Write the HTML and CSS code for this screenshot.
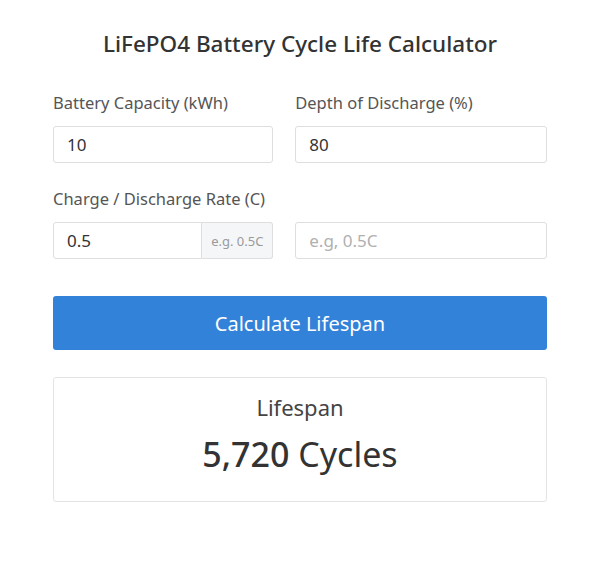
FILE: index.html
```html
<!DOCTYPE html>
<html lang="en">
<head>
    <meta charset="UTF-8">
    <meta name="viewport" content="width=device-width, initial-scale=1.0">
    <title>LiFePO4 Battery Cycle Life Calculator</title>
    <link rel="stylesheet" href="styles.css">
</head>
<body>
    <div class="calculator">
        <h1 class="title">LiFePO4 Battery Cycle Life Calculator</h1>

        <div class="field-grid">
            <div class="field">
                <label for="capacity">Battery Capacity (kWh)</label>
                <input id="capacity" class="text-input" type="text" value="10">
            </div>
            <div class="field">
                <label for="dod">Depth of Discharge (%)</label>
                <input id="dod" class="text-input" type="text" value="80">
            </div>
            <div class="field">
                <label for="rate">Charge / Discharge Rate (C)</label>
                <div class="input-group">
                    <input id="rate" class="text-input" type="text" value="0.5">
                    <span class="input-addon">e.g. 0.5C</span>
                </div>
            </div>
            <div class="field field-bottom">
                <input class="text-input" type="text" placeholder="e.g, 0.5C">
            </div>
        </div>

        <button class="calc-button" id="calc-btn">Calculate Lifespan</button>

        <div class="result-card">
            <div class="result-label">Lifespan</div>
            <div class="result-value"><span class="result-number" id="cycles">5,720</span> Cycles</div>
        </div>
    </div>
</body>
</html>
```

FILE: styles.css
```css
:root {
    --text-color: #333333;
    --label-color: #555555;
    --border-color: #dedede;
    --accent-color: #3282d9;
}

body {
    font-family: 'Noto Sans', 'Open Sans', sans-serif;
    margin: 0;
    padding: 0;
    background-color: #ffffff;
    color: var(--text-color);
}

.calculator {
    padding: 30px 53px 40px;
    display: flex;
    flex-direction: column;
}

.title {
    margin: 0;
    font-size: 22.5px;
    line-height: 28px;
    font-weight: 500;
    text-align: center;
    color: #333;
}

.field-grid {
    display: grid;
    grid-template-columns: 7fr 8fr;
    column-gap: 22px;
    row-gap: 26px;
    margin-top: 35px;
}

.field {
    display: flex;
    flex-direction: column;
    gap: 13px;
}

.field-bottom {
    justify-content: flex-end;
}

.field label {
    font-size: 16.5px;
    line-height: 20px;
    color: var(--label-color);
}

.text-input {
    box-sizing: border-box;
    height: 37px;
    width: 100%;
    padding: 0 13px;
    border: 1px solid var(--border-color);
    border-radius: 3px;
    font-family: inherit;
    font-size: 17px;
    color: var(--text-color);
    background: #fff;
    outline: none;
}

.text-input::placeholder {
    color: #b0b0b0;
    font-size: 17px;
}

.input-group {
    display: flex;
    height: 37px;
}

.input-group .text-input {
    flex: 1;
    min-width: 0;
    border-radius: 3px 0 0 3px;
}

.input-addon {
    display: flex;
    align-items: center;
    box-sizing: border-box;
    width: 71px;
    justify-content: center;
    border: 1px solid var(--border-color);
    border-left: none;
    border-radius: 0 3px 3px 0;
    background-color: #f4f6f8;
    color: #9a9a9a;
    font-size: 13px;
}

.calc-button {
    margin-top: 37px;
    height: 54px;
    border: none;
    border-radius: 3px;
    background-color: var(--accent-color);
    color: #ffffff;
    font-family: inherit;
    font-size: 20px;
    cursor: pointer;
}

.result-card {
    margin-top: 27px;
    height: 125px;
    box-sizing: border-box;
    border: 1px solid #e4e4e4;
    border-radius: 3px;
    display: flex;
    flex-direction: column;
    align-items: center;
    padding-top: 15px;
}

.result-label {
    font-size: 22px;
    line-height: 28px;
    color: #444;
}

.result-value {
    margin-top: 10px;
    font-size: 34px;
    line-height: 46px;
    color: #333;
}

.result-number {
    font-weight: 500;
}
```
